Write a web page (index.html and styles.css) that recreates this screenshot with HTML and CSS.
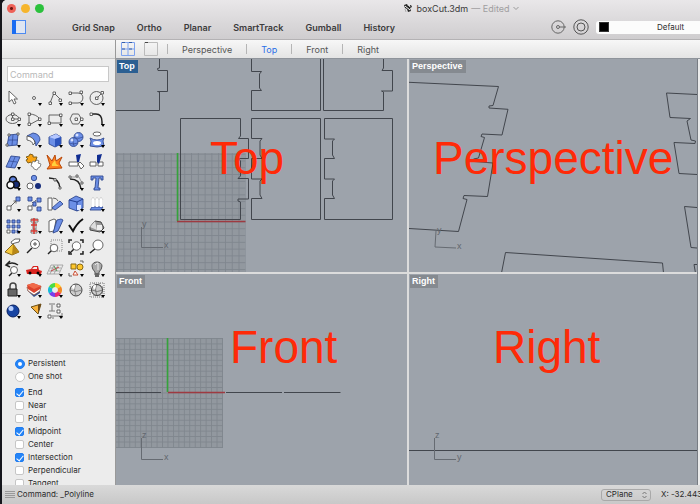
FILE: index.html
```html
<!DOCTYPE html>
<html lang="en">
<head>
<meta charset="utf-8">
<title>boxCut.3dm</title>
<link rel="stylesheet" href="styles.css">
</head>
<body>
<div class="window">
  <header class="titlebar">
    <div class="title-row">
      <div class="lights">
        <button class="light close" aria-label="Close"></button>
        <button class="light minimize" aria-label="Minimize"></button>
        <button class="light expand" aria-label="Zoom"></button>
      </div>
      <div class="title">
        <svg width="10" height="10" viewBox="0 0 10 10"><path d="M1 2l3-1 1 2 3-1 1 2-2 1 1 3-3 1-1-3-2-1z" fill="#222"/><path d="M2 3l5 4M6 2l1 2" stroke="#fff"/><path d="M2 6l1 3" stroke="#aaa"/></svg>
        <span>boxCut.3dm</span>
        <span class="edited">— Edited</span>
        <svg width="6" height="6" viewBox="0 0 6 6"><path d="M.5 2L3 4.5 5.500 2" fill="none" stroke="#999"/></svg>
      </div>
    </div>
    <div class="tool-row">
      <button class="panel-toggle" aria-label="Toggle sidebar"><svg width="14" height="14" viewBox="0 0 14 14"><rect x=".5" y=".5" width="13" height="13" fill="#dfe6f2" stroke="#4d8af0"/><path d="M0 0h4v14H0z" fill="#1a6cf2"/></svg></button>
      <nav class="modes">
        <button>Grid Snap</button><button>Ortho</button><button>Planar</button><button>SmartTrack</button><button>Gumball</button><button>History</button>
      </nav>
      <button class="round" aria-label="Record history"><svg width="16" height="16" viewBox="0 0 16 16" fill="none" stroke="#666"><circle cx="8" cy="8" r="6.200"/><circle cx="8" cy="8" r="1.500"/><path d="M9.500 8H16"/></svg></button>
      <button class="round" aria-label="Target"><svg width="16" height="16" viewBox="0 0 16 16" fill="none" stroke="#555"><circle cx="8" cy="8" r="7.200"/><circle cx="8" cy="8" r="4"/></svg></button>
      <label class="layer"><span class="swatch"></span><select aria-label="Layer"><option>Default</option></select></label>
    </div>
  </header>

  <aside class="sidebar">
    <div class="side-head"></div>
    <input class="command" type="text" placeholder="Command" aria-label="Command">
    <div class="tools">
      <button aria-label="Select"><svg viewBox="0 0 20 20"><path d="M6 3v11l3-2.500 2 4.500 2-1-2-4h3.500z" class="w"/></svg></button>
      <button class="more" aria-label="Point"><svg viewBox="0 0 20 20"><circle cx="10" cy="10" r="1.500" class="w"/></svg></button>
      <button class="more" aria-label="Polyline"><svg viewBox="0 0 20 20"><path d="M5 15L9 5l7 7" class="l"/><path d="M4 14h2.500v2.500H4zM8 4h2.500v2.500H8zM14 11h2.500v2.500H14z" class="w"/></svg></button>
      <button class="more" aria-label="Curve"><svg viewBox="0 0 20 20"><path d="M4 5h8c7 0 6 10 0 10H5" class="l"/><path d="M3 4h2.500v2.500H3zM14 3h2.500v2.500H14zM3 14h2.500v2.500H3z" class="w"/></svg></button>
      <button class="more" aria-label="Circle"><svg viewBox="0 0 20 20"><circle cx="9.500" cy="10" r="6.500" class="l"/><path d="M10 10l5-5" class="l"/><path d="M8.500 9h2.500v2.500H8.500zM14 3.500h2.500V6H14z" class="w"/></svg></button>

      <button class="more" aria-label="Ellipse"><svg viewBox="0 0 20 20"><ellipse cx="9.500" cy="10" rx="6.500" ry="4.500" class="l"/><path d="M9.500 5v5h6" class="l"/><path d="M8.500 9h2.500v2.500H8.500zM8.500 4h2.500v2.500H8.500zM15 9h2.500v2.500H15z" class="w"/></svg></button>
      <button class="more" aria-label="Arc"><svg viewBox="0 0 20 20"><path d="M5 16V5Q12 5 16 10L5 16" class="l"/><path d="M4 4h2.500v2.500H4zM4 14h2.500v2.500H4zM14.500 9H17v2.500h-2.500z" class="w"/></svg></button>
      <button class="more" aria-label="Rectangle"><svg viewBox="0 0 20 20"><path d="M4 6h12v8H4z" class="l"/><path d="M3 13h2.500v2.500H3zM14.500 5H17v2.500h-2.500z" class="w"/></svg></button>
      <button class="more" aria-label="Polygon"><svg viewBox="0 0 20 20"><path d="M4 10l2.500-5h6l3 5-3 5h-6z" class="l"/><path d="M9 9h2.500v2.500H9zM14.500 9H17v2.500h-2.500z" class="w"/></svg></button>
      <button class="more" aria-label="Fillet"><svg viewBox="0 0 20 20"><path d="M4 5h5q6 0 6 8v3" class="h"/><path d="M3 4h2.500v2.500H3z" class="w"/></svg></button>

      <button class="more" aria-label="Surface"><svg viewBox="0 0 20 20"><path d="M6 5l9-1-1 11-10 1z" class="b"/><path d="M5 10h10M10 5L9 15" class="n"/><path d="M5 4h2v2H5zM14 3h2v2h-2zM3 14h2v2H3z" class="w"/></svg></button>
      <button class="more" aria-label="Sweep"><svg viewBox="0 0 20 20"><path d="M3 6l6-3q7 1 7 7l-4 6Q12 8 3 6z" class="b"/><path d="M3 6q7 1 8 7l-2 2Q9 11 3 10z" class="w"/></svg></button>
      <button class="more" aria-label="Box"><svg viewBox="0 0 20 20"><path d="M4 7l7-3 5 3v7l-6 3-6-3z" class="b"/><path d="M4 7l6 2 6-2-5-3z" fill="#b4c7ff"/><path d="M10 9v8l6-3V7z" fill="#2d55bd"/></svg></button>
      <button class="more" aria-label="Sphere"><svg viewBox="0 0 20 20"><circle cx="12.500" cy="7" r="4.500" class="b"/><circle cx="7.500" cy="12" r="4.500" class="b"/><path d="M3 13q4 2 9 0M8 8q-2 4 0 8M9 8q4 1 8-1" class="n"/><circle cx="6" cy="10" r="1.500" fill="#d7e1ff"/><circle cx="11" cy="5" r="1.500" fill="#d7e1ff"/></svg></button>
      <button class="more" aria-label="Loft"><svg viewBox="0 0 20 20"><ellipse cx="10" cy="4" rx="4" ry="2" class="w"/><path d="M3 8q7 4 14 0l-1 3 1 5q-7 2-14 0l1-5z" class="b"/><ellipse cx="10" cy="13" rx="4" ry="2" fill="#fff"/></svg></button>

      <button class="more" aria-label="Edit surface"><svg viewBox="0 0 20 20"><path d="M8 4l9 1-5 11-9-1z" class="b"/><path d="M6 9l8 1M12 5L8 15" class="n"/></svg></button>
      <button aria-label="Plugins"><svg viewBox="0 0 20 20"><path d="M2 5l3-1 1-2 3 1v2l4 0-1 3-1 1 1 2-4 1-1-2-3 1-2-3 2-1z" fill="#f8a313" stroke="#80601a"/><path d="M9 9l2 1 2-2 2 1-1 2 3 1-1 3-2 1-1 2-3-1-1-2-2-1 1-3z" fill="#fff" stroke="#888"/></svg></button>
      <button aria-label="Explode"><svg viewBox="0 0 20 20"><path d="M2 3l5 6 3-6 1 6 6-4-3 6 3 5-15 1 3-4z" fill="#ff821c" stroke="#b74709"/><path d="M7 12l3-4 1 4 3 2H7z" fill="#ffd23c"/></svg></button>
      <button aria-label="Trim"><svg viewBox="0 0 20 20"><path d="M3 10h9v4H3z" class="w"/><path d="M12 12l2-2 4 4-3 3z" class="w"/><path d="M10 3l5-1-2 8h-2z" fill="#102d91"/></svg></button>
      <button aria-label="Split"><svg viewBox="0 0 20 20"><path d="M3 10h6v4H3zM11 10h5v4h-5z" class="w"/><path d="M10 3l5-1-3 10-2-2z" fill="#102d91"/></svg></button>

      <button class="more" aria-label="Join"><svg viewBox="0 0 20 20" stroke="#111" stroke-width="1.500"><circle cx="10" cy="7" r="3.500" fill="#5d7fdb"/><circle cx="13" cy="11.500" r="3.500" fill="#182d74"/><circle cx="7.500" cy="12" r="3.500" fill="#fff"/></svg></button>
      <button aria-label="Group"><svg viewBox="0 0 20 20"><circle cx="10" cy="5" r="2.700" class="b"/><circle cx="6" cy="13" r="3" class="w"/><circle cx="14" cy="13" r="3" fill="#172d7b"/></svg></button>
      <button aria-label="Points on"><svg viewBox="0 0 20 20"><path d="M4 5q10 0 11 10" class="h"/><path d="M9 5.500h2V8H9zM14 14h2v2h-2z" class="w"/></svg></button>
      <button class="more" aria-label="Edit points"><svg viewBox="0 0 20 20"><path d="M4 6q10 0 11 10" class="h"/><path d="M4 4h9l3 6" stroke="#999" fill="none"/><path d="M3 3h2v2H3zM10 2h2v2h-2zM15 9h2v2h-2z" class="w"/></svg></button>
      <button aria-label="Text object"><svg viewBox="0 0 20 20"><path d="M4 3h12v4h-2V5h-2l-1 10h2v2H7v-2h1l1-10H6v2H4z" class="b"/></svg></button>

      <button class="more" aria-label="Move"><svg viewBox="0 0 20 20"><path d="M4 12h4v4H4z" class="w"/><path d="M13 3h4v4h-4z" class="b"/><path d="M8 12l5-5M10.500 7H13v2.500" class="l"/></svg></button>
      <button aria-label="Copy"><svg viewBox="0 0 20 20"><path d="M8 8l4 4M7 13l5-7" class="l"/><path d="M4 3h4v4H4zM13 4h4v4h-4zM13 13h4v4h-4zM9 8h3v4H9z" class="b"/><path d="M4 12h4v4H4z" class="w"/></svg></button>
      <button aria-label="Rotate"><svg viewBox="0 0 20 20"><path d="M3 4h4v12H3z" class="w"/><path d="M8 4q4 0 5 3" class="l"/><path d="M7 14l8-7 3 3-8 6z" class="b"/></svg></button>
      <button class="more" aria-label="Scale"><svg viewBox="0 0 20 20"><path d="M3 6l7-4 7 3v9l-6 3-8-3z" class="b"/><path d="M3 6l8 2 6-3M11 8v9" stroke="#203d91" fill="none"/><path d="M11 11h4v5h-4z" fill="#dce5ff"/></svg></button>
      <button class="more" aria-label="Extrude"><svg viewBox="0 0 20 20"><path d="M5 13h11l-2 3H3z" class="b"/><path d="M6 13V5M10 13V5M14 13V5" stroke="#fff" stroke-width="2"/><path d="M4 6l2-3 2 3M8 6l2-3 2 3M12 6l2-3 2 3" fill="#fff" stroke="#bbb" stroke-width=".5"/></svg></button>

      <button class="more" aria-label="Array"><svg viewBox="0 0 20 20"><path d="M4 4h3v3H4zM9 4h3v3H9zM14 4h3v3h-3zM4 9h3v3H4zM9 9h3v3H9zM14 9h3v3h-3zM9 14h3v3H9zM14 14h1v3h-1z" class="b"/><path d="M4 14h3v3H4z" class="w"/></svg></button>
      <button class="more" aria-label="Align"><svg viewBox="0 0 20 20"><path d="M7 3h7v3H7zM9 7h3v6H9zM7 14h6v3H7z" fill="#fff" stroke="#777"/><path d="M10 2v16M7 4h7M7 9h6M7 15h6" stroke="#d63932" stroke-width="1.500"/></svg></button>
      <button class="more" aria-label="Orient"><svg viewBox="0 0 20 20"><path d="M4 5l5-2 2 1-2 11-5 1z" class="w"/><path d="M12 4l4-1 2 1-5 11-5 2z" class="b"/></svg></button>
      <button class="more" aria-label="Check"><svg viewBox="0 0 20 20"><path d="M3 9l4 6Q11 7 17 3" fill="none" stroke="#111" stroke-width="2"/></svg></button>
      <button class="more" aria-label="Solids"><svg viewBox="0 0 20 20"><path d="M3 11l5-6 6 1 3 6-4 4-10-2z" fill="#999" stroke="#444"/><path d="M3 11l5-6 2 9z" fill="#ddd"/><path d="M10 9h5v5h-5z" fill="#eee"/></svg></button>

      <button aria-label="Pan"><svg viewBox="0 0 20 20"><path d="M10 7l6 8-7 3-7-3z" fill="#f5c83b" stroke="#856720"/><path d="M10 7l-1 11 7-3z" fill="#b78716"/><path d="M8 5l4-3h5l-1 3-4 1-3 1z" class="w"/></svg></button>
      <button aria-label="Zoom dynamic"><svg viewBox="0 0 20 20"><path d="M8 11l-5 5" class="h"/><circle cx="11" cy="7" r="4.500" class="w"/><path d="M9 7h4M11 5v4" stroke="#555"/></svg></button>
      <button aria-label="Zoom window"><svg viewBox="0 0 20 20"><path d="M6 3h11v11H6z" fill="none" stroke="#888" stroke-dasharray="1 1"/><path d="M7 13l-4 4" class="h"/><circle cx="9" cy="11" r="3.800" class="w"/></svg></button>
      <button aria-label="Zoom extents"><svg viewBox="0 0 20 20"><path d="M3 6V3h3M14 3h3v3M3 14v3h3M14 17h3v-3" class="h"/><path d="M8 12l-4 4" class="h"/><circle cx="10.500" cy="9" r="4.200" class="w"/></svg></button>
      <button aria-label="Zoom"><svg viewBox="0 0 20 20"><path d="M9 11l-6 5" class="h"/><circle cx="11" cy="8" r="5" class="w"/></svg></button>

      <button class="more" aria-label="Undo view"><svg viewBox="0 0 20 20"><path d="M3 6q6-4 12 0M7 2L3 6l4 2" class="h"/><path d="M9 14l-3 3" class="h"/><circle cx="11" cy="11" r="3.500" class="w"/></svg></button>
      <button class="more" aria-label="Named views"><svg viewBox="0 0 20 20"><path d="M2 11l5-1 2-3h5l1 4 3 1-1 3H3z" fill="#d92420"/><path d="M8 10l2-2h3v2z" fill="#eee"/><circle cx="6" cy="14" r="1.500"/><circle cx="14" cy="14" r="1.500"/></svg></button>
      <button class="more" aria-label="Construction plane"><svg viewBox="0 0 20 20"><path d="M6 6h12l-4 9H2zM5 9h11M4 12h11M9 6L5 15M13 6L9 15" fill="none" stroke="#999" stroke-width=".8"/><path d="M6 12l8-4" stroke="#c84343"/><path d="M9 7l3 5" stroke="#4c9752"/></svg></button>
      <button class="more" aria-label="Selection"><svg viewBox="0 0 20 20"><path d="M5 5h5v5H5z" fill="#ffc82c" stroke="#8b6b15"/><circle cx="14" cy="8" r="3" fill="#ffc82c" stroke="#8b6b15"/><path d="M7 16l2-4 3 4z" fill="#fff" stroke="#c94a2d"/><path d="M3 14v3h3M14 2h3v2" class="l"/></svg></button>
      <button class="more" aria-label="Light"><svg viewBox="0 0 20 20"><path d="M8 13q-3-3-3-6a5 4 0 0 1 10 0q0 3-3 6v3H8z" fill="#aaa" stroke="#555"/><path d="M8 6q1-2 3-2v7" stroke="#eee" fill="none"/><path d="M8 14h4v4H8z" fill="#666"/></svg></button>

      <button class="more" aria-label="Lock"><svg viewBox="0 0 20 20"><path d="M7 9V6a3 3 0 0 1 6 0v3" fill="none" stroke="#444" stroke-width="1.500"/><path d="M5 9h9v7H5z" fill="#666" stroke="#222"/></svg></button>
      <button class="more" aria-label="Layers"><svg viewBox="0 0 20 20"><path d="M3 10l7 7 6-4V8l-6 4z" fill="#345392"/><path d="M3 7l1 4 6 4 6-4 1-5-7 4z" fill="#fff" stroke="#8a442a" stroke-width=".7"/><path d="M3 5l6-2 8 3-1 3-6 4-6-4z" fill="#dc432d"/><path d="M3 5l6-2 8 3-7 3z" fill="#f06a4a"/></svg></button>
      <button class="more" aria-label="Color"><svg viewBox="0 0 20 20" fill="none" stroke-width="4"><path d="M10 5a5 5 0 0 1 4.300 2.500" stroke="#ffd51f"/><path d="M14.300 7.500a5 5 0 0 1 0 5" stroke="#f38722"/><path d="M14.300 12.500A5 5 0 0 1 10 15" stroke="#e92a73"/><path d="M10 15a5 5 0 0 1-4.300-2.500" stroke="#7740ed"/><path d="M5.700 12.500a5 5 0 0 1 0-5" stroke="#15bad7"/><path d="M5.700 7.500A5 5 0 0 1 10 5" stroke="#4bdc44"/></svg></button>
      <button aria-label="Shade"><svg viewBox="0 0 20 20"><circle cx="10" cy="10" r="6" fill="#ccc" stroke="#444"/><circle cx="8" cy="7" r="2" fill="#fff"/><path d="M4 10q6 3 12 0M10 4q-3 6 0 12" stroke="#777" stroke-width=".8" fill="none"/></svg></button>
      <button class="more" aria-label="Render mesh"><svg viewBox="0 0 20 20"><path d="M3 3h14v14H3zM3 7h14M3 13h14M7 3v14M13 3v14" fill="none" stroke="#777" stroke-dasharray="1 1"/><circle cx="10" cy="10" r="5.500" fill="#ccc" stroke="#333"/><circle cx="8" cy="7" r="2" fill="#fff"/><path d="M5 10q5 3 11 0M10 4q-3 6 0 12" stroke="#666" stroke-width=".8" fill="none"/></svg></button>

      <button class="more" aria-label="Render"><svg viewBox="0 0 20 20"><circle cx="10" cy="10" r="6" fill="#1744a2" stroke="#082061"/><circle cx="8" cy="7.500" r="2.500" fill="#b9d0ff"/></svg></button>
      <button class="more" aria-label="Spotlight"><svg viewBox="0 0 20 20"><path d="M7 6l10-3-3 10z" fill="#f8b23c" stroke="#695019"/><path d="M14 4l3-1-3 10z" fill="#704a17"/></svg></button>
      <button class="more" aria-label="Dimension"><svg viewBox="0 0 20 20"><path d="M4 3h6M4 10h6M7 4v6M8 14v4M17 12v5M9 15h8" fill="none" stroke="#777"/><path d="M12 3h3v3h-3zM12 9h3v3h-3zM3 14h3v3H3z" class="w"/></svg></button>
    </div>
    <fieldset class="snaps">
      <label><input type="radio" name="mode" checked>Persistent</label>
      <label><input type="radio" name="mode">One shot</label>
      <div class="snap-list">
        <label><input type="checkbox" checked>End</label>
        <label><input type="checkbox">Near</label>
        <label><input type="checkbox">Point</label>
        <label><input type="checkbox" checked>Midpoint</label>
        <label><input type="checkbox">Center</label>
        <label><input type="checkbox" checked>Intersection</label>
        <label><input type="checkbox">Perpendicular</label>
        <label><input type="checkbox">Tangent</label>
      </div>
    </fieldset>
  </aside>

  <main class="workspace">
    <nav class="tabs">
      <button class="layout" aria-label="Four views"><svg width="14" height="14" viewBox="0 0 14 14"><path d="M.5.5h13v13H.5zM7 0v14M0 7h14" fill="none" stroke="#7fa3ee"/><path d="M1 .5h3M8 .5h3M1 7h3M8 7h3" stroke="#345da8"/></svg></button>
      <button class="layout" aria-label="Single view"><svg width="14" height="14" viewBox="0 0 14 14"><path d="M.5.5h13v13H.5z" fill="none" stroke="#bbb"/><path d="M1 .5h3" stroke="#444"/></svg></button>
      <button class="tab">Perspective</button>
      <button class="tab current">Top</button>
      <button class="tab">Front</button>
      <button class="tab">Right</button>
    </nav>
    <div class="views">
      <section class="view">
        <svg class="scene">
          <defs><pattern id="grid-top" x="61.500" y="162.500" width="6.780" height="6.780" patternUnits="userSpaceOnUse"><path d="M0 .5h7M.5 0v7" class="mesh"/></pattern></defs>
          <rect x="0" y="94" width="129.500" height="130" class="floor"/>
          <rect x="0" y="94" width="129.500" height="130" fill="url(#grid-top)"/>
          <g transform="translate(-116 -59)">
            <path class="curve" d="M116 110.500H159.500V92L157.500 91.500H167.500V70.500H158L157.500 68.500 159.500 68V59M251.500 59V71.500H261.500L259.500 74V88L261.500 90.500H251.500V110.500H320.500V59M323.500 59V110.500H383.500V92L381.500 91H392.500V70.500H382L383.500 68V59M180.500 118.500H240.500V136L238.500 138.500H248.500V158.500H238.500L240.500 161V176L238 178.500H248.500V199H238V201L240.500 202V219.500H180.500ZM251.500 118.500H320.500V219.500H251.500V198.500H262L260 195V181L262 179H251.500V158.500H262L260 155V141L262 138.500H251.500ZM324.500 118.500H392.500V219.500H324.500V198.500H334.500L332.500 195V181L334.500 179H324.500V158.500H334.500L332.500 155V141L334.500 139H324.500Z"/>
            <path class="green" d="M177.500 153V221"/><path class="red" d="M177 221.500H245.500"/>
            <path class="axis" d="M141.500 227V247.500H163"/><text class="name" x="142" y="227">y</text><text class="name" x="164" y="248">x</text>
            <text class="big" x="210" y="174">Top</text>
          </g>
        </svg>
        <h2 class="active">Top</h2>
      </section>
      <section class="view">
        <svg class="scene"><g transform="translate(-409 -59)">
          <path class="curve" d="M409 82.300L498.500 86.500 493 105.500 489 106 489 108 508 109.300 502 135 482 134 481 136.500 484.500 137.500 478.500 158 473.500 159 474 161.500 493 163 487.500 196.500 464 195.500 463 198.500 467 199.500 458.500 231.500 409 228.500M697 94.500L666.500 93 670 117.500 690.500 118.500 687 121 691 140 695.500 141 695 143.500 674 142.500 679 173.500 697 174.500M697 207.500L684.500 206.500 691 247.500 697 248M501.500 273L505.500 252.500 662.500 263 663.500 273M697 264.500H694L695.500 273"/>
          <path class="axis" d="M436 231L435 247 456 248"/><text class="name" x="437" y="233">y</text><text class="name" x="457" y="249">x</text>
          <text class="big" x="433" y="174">Perspective</text>
        </g></svg>
        <h2>Perspective</h2>
      </section>
      <section class="view">
        <svg class="scene">
          <defs><pattern id="grid-front" x="51.500" y="118.500" width="5.450" height="5.450" patternUnits="userSpaceOnUse"><path d="M0 .5h6M.5 0v6" class="mesh"/></pattern></defs>
          <rect x="0" y="64" width="107" height="110" class="floor"/>
          <rect x="0" y="64" width="107" height="110" fill="url(#grid-front)"/>
          <g transform="translate(-116 -274)">
            <path class="curve" d="M116 392.500H161M226 392.500H282M284 392.500H340.500"/>
            <path class="green" d="M167.500 338V392"/><path class="red" d="M168 392.500H225"/>
            <path class="axis" d="M141.500 438V459.500H163"/><text class="name" x="142" y="438">z</text><text class="name" x="164" y="460">x</text>
            <text class="big" x="230" y="363">Front</text>
          </g>
        </svg>
        <h2>Front</h2>
      </section>
      <section class="view">
        <svg class="scene"><g transform="translate(-409 -274)">
          <path class="curve" d="M409 450.500H2000"/>
          <path class="axis" d="M434.500 438V459.500H456"/><text class="name" x="435" y="438">z</text><text class="name" x="457" y="460">y</text>
          <text class="big" x="493" y="363">Right</text>
        </g></svg>
        <h2>Right</h2>
      </section>
    </div>
  </main>

  <footer class="status">
    <svg width="10" height="10" viewBox="0 0 10 10"><path d="M0 1.500h10M0 3.500h10M0 5.500h10M0 7.500h10" stroke="#999"/></svg>
    <span class="prompt">Command: _Polyline</span>
    <label class="plane"><select aria-label="Plane"><option>CPlane</option></select><svg width="5" height="8" viewBox="0 0 5 8"><path d="M.5 3l2-2 2 2M.5 5l2 2 2-2" fill="none" stroke="#777"/></svg></label>
    <output class="coords">X: -32.443</output>
  </footer>
</div>
</body>
</html>
```
FILE: styles.css
```css
* { box-sizing: border-box; }

body {
  margin: 0;
  height: 100vh;
  padding-left: 2px;
  overflow: hidden;
  background: #15161c;
  color: #2b2b2b;
  font: 8px/13px Inter, "Liberation Sans", sans-serif;
}

button, select, input { font: inherit; color: inherit; margin: 0; }

button {
  display: block;
  padding: 0;
  border: 0;
  background: none;
}

svg { display: block; }

.window {
  display: grid;
  grid-template: 40px minmax(0, 1fr) 19px / 114px minmax(0, 1fr);
  height: 100%;
  overflow: hidden;
  border-top-left-radius: 5px;
  background: #ececec;
}

/* Title and toolbar */
.titlebar {
  grid-column: 1 / -1;
  min-width: 0;
  border-bottom: 1px solid #b4b2b4;
  background: linear-gradient(#e9e7e9, #cfcdcf);
}

.title-row { display: flex; align-items: center; height: 16px; }
.lights { display: flex; gap: 5px; padding-left: 5px; }
.light { width: 9px; height: 9px; border-radius: 50%; }
.close { background: radial-gradient(#6d1510 0 1px, #ee6158 2px); }
.minimize { background: #f6b52d; }
.expand { background: #2cc13d; }

.title {
  flex: 1;
  display: flex;
  align-items: center;
  justify-content: center;
  gap: 3px;
  padding-left: 178px;
  font-size: 9px;
  color: #3a3a3a;
}
.edited { color: #a09ea0; }

.tool-row { display: flex; align-items: center; height: 22px; }
.panel-toggle { margin: 0 46px 0 10px; }
.modes { display: flex; flex: 1; gap: 22px; font-size: 9px; font-weight: 600; color: #3c3b3c; }
.round { margin-right: 7px; }

.layer {
  display: flex;
  align-items: center;
  width: 104px;
  height: 13px;
  padding-left: 3px;
  border-radius: 3px 0 0 3px;
  background: #fcfcfc;
}
.swatch { width: 10px; height: 10px; border: 1px solid #333; background: #000; }
.layer select {
  flex: 1;
  min-width: 0;
  padding: 0 0 0 48px;
  border: 0;
  appearance: none;
  background: none;
}

/* Sidebar */
.sidebar {
  display: flex;
  flex-direction: column;
  min-height: 0;
  overflow: hidden;
  border-right: 1px solid #999;
}
.side-head {
  flex: none;
  height: 19px;
  border-bottom: 1px solid #c4c4c4;
  background: linear-gradient(#f5f5f5, #e6e6e6);
}
.command {
  flex: none;
  height: 16px;
  margin: 7px 6px 5px 5px;
  padding: 0 2px;
  border: 1px solid #c8c8c8;
  background: #fff;
  font-size: 9px;
}
.command::placeholder { color: #b8b8b8; }

.tools {
  flex: none;
  display: grid;
  grid-template: repeat(11, 1fr) / repeat(5, 1fr);
  place-items: center;
  height: 235px;
  padding-right: 7px;
}
.tools button { position: relative; width: 20px; height: 20px; }
.tools svg { width: 20px; height: 20px; }
.tools .more::after {
  content: "";
  position: absolute;
  right: 2px;
  bottom: 2px;
  border: 2px solid transparent;
  border-top: 3px solid #000;
  border-bottom: 0;
}
.w { fill: #fff; stroke: #555; stroke-width: .9; }
.l { fill: none; stroke: #555; stroke-width: .9; }
.h { fill: none; stroke: #222; stroke-width: 1.5; }
.b { fill: #6c8fe6; stroke: #30488f; stroke-width: .9; }
.n { fill: none; stroke: #30488f; stroke-width: .7; }

.snaps {
  margin: 31px 0 0;
  padding: 3px 0 0 13px;
  border: 0;
  border-top: 1px solid #d2d2d2;
}
.snaps label { display: flex; align-items: center; gap: 3px; height: 13px; }
.snap-list { padding-top: 3px; }
.snaps input {
  appearance: none;
  width: 10px;
  height: 10px;
  border: 1px solid #c6c6c6;
  background: #fff;
}
.snaps [type="radio"] { border-radius: 50%; }
.snaps [type="checkbox"] { width: 9px; height: 9px; margin-right: 1px; border-radius: 2px; }
.snaps :checked { display: grid; place-items: center; border-color: #1f7cf0; background: #2484f7; }
.snaps [type="radio"]:checked::after { content: ""; width: 4px; height: 4px; border-radius: 50%; background: #fff; }
.snaps [type="checkbox"]:checked::after {
  content: "";
  width: 3px;
  height: 6px;
  border: solid #fff;
  border-width: 0 1px 1px 0;
  transform: rotate(40deg);
}

/* Viewports */
.workspace { display: flex; flex-direction: column; min-width: 0; min-height: 0; }
.tabs {
  flex: none;
  display: flex;
  align-items: center;
  height: 19px;
  padding-left: 5px;
  border-bottom: 1px solid #8f949b;
  background: linear-gradient(#f7f7f7, #e4e4e4);
  font-size: 9px;
  color: #555;
}
.layout { margin-right: 9px; }
.tab { display: flex; align-items: center; }
.tab::before { content: ""; width: 1px; height: 10px; margin: 0 14px; background: #b5b5b5; }
.layout + .tab::before { margin-left: 0; }
.current { color: #2c6fe8; }

.views {
  flex: 1;
  display: grid;
  grid-template: 213fr 211fr / 291fr 288fr;
  gap: 2px;
  min-height: 0;
  margin-right: 2px;
  border-right: 1px solid #777c83;
  background: #dcdcdc;
}
.view { position: relative; min-width: 0; min-height: 0; overflow: hidden; background: #9da3ab; }
.scene { width: 100%; height: 100%; }
.view h2 {
  position: absolute;
  top: 1px;
  left: 1px;
  margin: 0;
  padding: 0 3px 0 2px;
  background: #858a90;
  color: #fff;
  font: bold 9px/13px "Liberation Sans", sans-serif;
}
.view .active { background: #2b5f92; }

.floor { fill: #92989f; }
.mesh { stroke: #80868e; stroke-width: .9; }
.curve { fill: none; stroke: #42464d; }
.green { stroke: #35a33b; stroke-width: 1.6; }
.red { stroke: #9e3a41; stroke-width: 1.4; }
.axis { fill: none; stroke: #666b72; }
.name { fill: #62676e; font: 9px "Liberation Sans", sans-serif; }
.big { fill: #ff2a08; font: 46px "Liberation Sans", sans-serif; }

/* Status bar */
.status {
  grid-column: 1 / -1;
  display: flex;
  align-items: center;
  min-width: 0;
  padding-left: 3px;
  background: linear-gradient(#d9d9d9, #c8c8c8);
}
.prompt { flex: 1; padding-left: 2px; }
.plane {
  display: flex;
  align-items: center;
  justify-content: space-between;
  width: 50px;
  height: 12px;
  margin-right: 10px;
  padding: 0 3px 0 4px;
  border: 1px solid #a9a9a9;
  border-radius: 3px;
}
.plane select { padding: 0; border: 0; appearance: none; background: none; }
.coords { width: 39px; overflow: hidden; white-space: nowrap; }
```
